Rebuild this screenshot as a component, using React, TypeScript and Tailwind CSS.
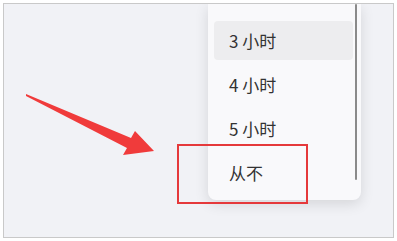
const items = ["3 小时", "4 小时", "5 小时", "从不"];

export default function App() {
  return (
    <div className="relative w-[397px] h-[241px] bg-white p-[3px] font-['Noto_Sans_CJK_SC',sans-serif]">
      <div className="h-[235px] w-[391px] border border-[#c9c9c9] bg-[#f1f2f6] overflow-hidden">
        <div className="relative ml-[204px] w-[153px] rounded-b-lg bg-[#f9f9fb] px-[6px] pt-[17px] pb-[8px] shadow-[0_4px_14px_rgba(0,0,0,0.12)]">
          <ul className="flex flex-col gap-[5px] pr-[2px]">
            {items.map((label, i) => (
              <li
                key={label}
                className={
                  "flex h-[39px] items-center rounded-[4px] pl-[15px] text-[17px] text-[#333333] " +
                  (i === 0 ? "bg-[#ededef]" : "")
                }
              >
                {label}
              </li>
            ))}
          </ul>
          <div className="absolute right-[4px] top-0 h-[176px] w-[2px] rounded-full bg-[#8a8a8a]" />
        </div>
      </div>

      <div className="absolute left-[177px] top-[144px] h-[60px] w-[131px] border-2 border-[#e5393b]" />

      <svg className="absolute left-0 top-0" width="397" height="241" viewBox="0 0 397 241">
        <polygon
          points="26,94 131,138 135,131 154,151 123,155 127,148 26,96"
          fill="#f03b3b"
        />
      </svg>
    </div>
  );
}
